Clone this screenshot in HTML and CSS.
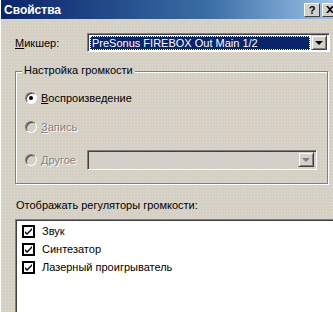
FILE: index.html
```html
<!DOCTYPE html>
<html lang="ru">
<head>
    <meta charset="UTF-8">
    <title>Свойства</title>
    <link rel="stylesheet" href="styles.css">
</head>
<body>
    <div class="window">
        <div class="titlebar">
            <span class="title">Свойства</span>
            <div class="title-buttons">
                <span class="tbtn">?</span>
                <span class="tbtn">
                    <svg width="8" height="7" viewBox="0 0 8 7"><path d="M0 0h2l2 2 2-2h2L5 3.5 8 7H6L4 5 2 7H0l3-3.5z" fill="#000"/></svg>
                </span>
            </div>
        </div>

        <div class="content">
            <div class="mixer-row">
                <span class="label"><u>М</u>икшер:</span>
                <div class="combo">
                    <div class="combo-value selected">PreSonus FIREBOX Out Main 1/2</div>
                    <span class="combo-btn"><span class="arrow"></span></span>
                </div>
            </div>

            <div class="group">
                <span class="group-title">Настройка громкости</span>
                <div class="radio-row first">
                    <span class="radio checked"></span>
                    <span class="radio-text"><u>В</u>оспроизведение</span>
                </div>
                <div class="radio-row disabled">
                    <span class="radio"></span>
                    <span class="radio-text"><u>З</u>апись</span>
                </div>
                <div class="radio-row disabled other">
                    <span class="radio"></span>
                    <span class="radio-text"><u>Д</u>ругое</span>
                    <div class="combo small">
                        <div class="combo-value"></div>
                        <span class="combo-btn"><span class="arrow grey"></span></span>
                    </div>
                </div>
            </div>

            <div class="list-label">Отображать регуляторы громкости:</div>
            <div class="listbox">
                <div class="item"><span class="check"><svg width="9" height="9" viewBox="0 0 9 9"><path d="M1 4l2 2 5-5v2L3 8 1 6z" fill="#000"/></svg></span>Звук</div>
                <div class="item"><span class="check"><svg width="9" height="9" viewBox="0 0 9 9"><path d="M1 4l2 2 5-5v2L3 8 1 6z" fill="#000"/></svg></span>Синтезатор</div>
                <div class="item"><span class="check"><svg width="9" height="9" viewBox="0 0 9 9"><path d="M1 4l2 2 5-5v2L3 8 1 6z" fill="#000"/></svg></span>Лазерный проигрыватель</div>
            </div>
        </div>
    </div>
</body>
</html>
```

FILE: styles.css
```css
body {
    margin: 0;
    overflow: hidden;
    background: #d4d0c8;
    font-family: "Liberation Sans", Arial, sans-serif;
    font-size: 11px;
    color: #000;
}
.window {
    width: 345px;
    height: 312px;
    border-left: 1px solid #fff;
    background-color: #d4d0c8;
    background-image: radial-gradient(circle, rgba(240, 236, 170, 0.55) 0.6px, transparent 0.9px);
    background-size: 3px 3px;
}
.titlebar {
    height: 19px;
    display: flex;
    justify-content: space-between;
    align-items: center;
    padding-left: 3px;
    padding-right: 8px;
    background: linear-gradient(to right, #0a246a, #3a6ea5 60%, #a6caf0);
}
.title {
    color: #fff;
    font-weight: bold;
    font-size: 12px;
}
.title-buttons {
    display: flex;
    gap: 2px;
}
.tbtn {
    width: 14px;
    height: 12px;
    display: flex;
    align-items: center;
    justify-content: center;
    background: #d4d0c8;
    border: 1px solid;
    border-color: #fff #404040 #404040 #fff;
    font-weight: bold;
    font-size: 11px;
}
.content {
    padding: 14px 0 0 14px;
}
.mixer-row {
    display: flex;
    align-items: center;
}
.label {
    width: 72px;
}
.combo {
    width: 243px;
    height: 19px;
    display: flex;
    background: #fff;
    border: 1px solid;
    border-color: #808080 #fff #fff #808080;
    box-shadow: inset 1px 1px 0 #404040;
    box-sizing: border-box;
    padding: 2px 2px 1px 2px;
}
.combo-value {
    flex: 1;
    height: 14px;
    line-height: 14px;
    padding-left: 2px;
    margin-right: 1px;
}
.combo-value.selected {
    background: #0a246a;
    color: #fff;
    outline: 1px dotted #fff;
    outline-offset: -1px;
}
.combo-btn {
    width: 16px;
    height: 15px;
    margin-top: -1px;
    box-sizing: border-box;
    background: #d4d0c8;
    border: 1px solid;
    border-color: #d4d0c8 #404040 #404040 #d4d0c8;
    box-shadow: inset 1px 1px 0 #fff, inset -1px -1px 0 #808080;
    display: flex;
    align-items: center;
    justify-content: center;
}
.arrow {
    width: 0;
    height: 0;
    border-left: 4px solid transparent;
    border-right: 4px solid transparent;
    border-top: 4px solid #000;
}
.arrow.grey {
    border-top-color: #808080;
}
.group {
    position: relative;
    margin-top: 19px;
    width: 311px;
    height: 111px;
    border: 1px solid #808080;
    box-shadow: inset 1px 1px 0 #fff, 1px 1px 0 #fff;
}
.group-title {
    position: absolute;
    top: -8px;
    left: 6px;
    padding: 0 2px;
    background: #d4d0c8;
}
.radio-row {
    display: flex;
    align-items: center;
    height: 14px;
    padding-left: 9px;
    margin-top: 15px;
}
.radio-row.first {
    margin-top: 19px;
}
.radio-row.other {
    margin-top: 16px;
    height: 20px;
}
.radio {
    width: 10px;
    height: 10px;
    border-radius: 50%;
    border: 1px solid;
    border-color: #808080 #fff #fff #808080;
    box-shadow: inset 1px 1px 0 #404040;
    background: #fff;
    margin-right: 4px;
    display: flex;
    align-items: center;
    justify-content: center;
}
.radio.checked::after {
    content: "";
    width: 4px;
    height: 4px;
    border-radius: 50%;
    background: #000;
}
.disabled .radio {
    background: #d4d0c8;
}
.disabled .radio-text {
    color: #808080;
    text-shadow: 1px 1px 0 #fff;
}
.radio-text {
    width: 46px;
}
.combo.small {
    width: 230px;
    height: 20px;
    background: #d4d0c8;
}
.combo.small .combo-value {
    margin-right: 0;
}
.list-label {
    margin-top: 15px;
    margin-left: 1px;
    line-height: 13px;
}
.listbox {
    margin-top: 7px;
    height: 100px;
    background: #fff;
    border: 1px solid;
    border-color: #808080 #fff #fff #808080;
    box-shadow: inset 1px 1px 0 #404040;
    padding: 2px 0 0 6px;
}
.item {
    display: flex;
    align-items: center;
    height: 18px;
}
.check {
    width: 9px;
    height: 9px;
    border: 2px solid #000;
    margin-right: 7px;
    display: flex;
    align-items: center;
    justify-content: center;
}
```
